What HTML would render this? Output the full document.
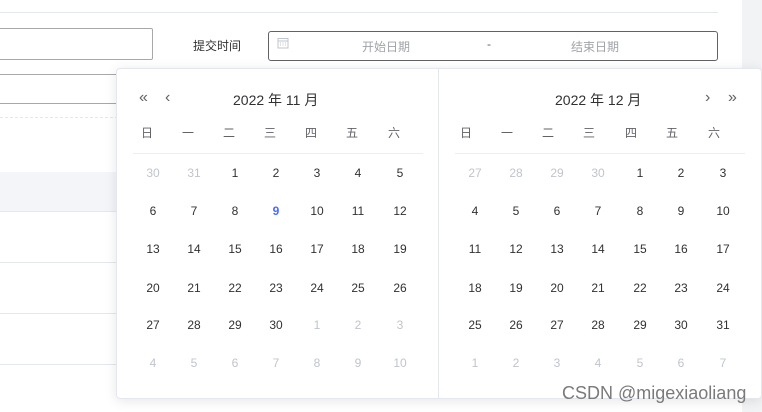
<!DOCTYPE html>
<html><head><meta charset="utf-8">
<style>
*{margin:0;padding:0;box-sizing:border-box}
body{width:762px;height:412px;overflow:hidden;background:#fff;position:relative;font-family:"Liberation Sans","Noto Sans CJK SC",sans-serif;color:#303133}
.a{position:absolute}
.c{position:absolute;width:30px;text-align:center;font-size:12px;line-height:16px;transform:translateX(-15px)}
.g{color:#c0c4cc}
.w{color:#606266}
</style></head><body>
<div class="a" style="left:742px;top:0;width:20px;height:412px;background:#f2f3f5"></div>
<div class="a" style="left:0;top:12px;width:718px;height:1px;background:#e4e7ed"></div>
<div class="a" style="left:-2px;top:28px;width:155px;height:32px;border:1px solid #a8a8a8;border-radius:2px"></div>
<div class="a" style="left:193px;top:37px;font-size:12px;color:#303133">提交时间</div>
<div class="a" style="left:268px;top:31px;width:450px;height:30px;border:1px solid #606266;border-radius:3px"></div>
<svg class="a" style="left:277px;top:37px" width="12" height="12" viewBox="0 0 12 12"><rect x="1" y="1.5" width="10" height="9.5" fill="none" stroke="#c0c4cc"/><line x1="1" y1="4" x2="11" y2="4" stroke="#c0c4cc"/><path d="M3 6h1M5.5 6h1M8 6h1M3 8h1M5.5 8h1M8 8h1" stroke="#c0c4cc"/></svg>
<div class="a" style="left:362px;top:38px;font-size:12px;color:#a0a3a8">开始日期</div>
<div class="a" style="left:487px;top:37px;font-size:12px;color:#606266">-</div>
<div class="a" style="left:571px;top:38px;font-size:12px;color:#a0a3a8">结束日期</div>
<div class="a" style="left:0;top:74px;width:118px;height:1px;background:#a8a8a8"></div>
<div class="a" style="left:0;top:103px;width:118px;height:1px;background:#a8a8a8"></div>
<div class="a" style="left:0;top:117px;width:118px;border-top:1px dashed #e4e7ed"></div>
<div class="a" style="left:0;top:172px;width:118px;height:39px;background:#f4f5f8"></div>
<div class="a" style="left:0;top:211px;width:118px;height:1px;background:#e4e7ed"></div>
<div class="a" style="left:0;top:262px;width:118px;height:1px;background:#e4e7ed"></div>
<div class="a" style="left:0;top:313px;width:118px;height:1px;background:#e4e7ed"></div>
<div class="a" style="left:0;top:364px;width:118px;height:1px;background:#e4e7ed"></div>

<div class="a" id="pop" style="left:116px;top:68px;width:646px;height:331px;background:#fff;border:1px solid #e4e7ed;border-radius:4px;box-shadow:0 2px 12px rgba(0,0,0,.1)"></div>
<div class="a" style="left:438px;top:68px;width:1px;height:331px;background:#e4e7ed"></div>
<div class="a" style="left:133px;top:153px;width:290px;height:1px;background:#ebeef5"></div>
<div class="a" style="left:455px;top:153px;width:290px;height:1px;background:#ebeef5"></div>
<div class="a" style="left:139px;top:89px;font-size:16px;color:#606266">«</div>
<div class="a" style="left:165px;top:89px;font-size:16px;color:#606266">‹</div>
<div class="a" style="left:705px;top:89px;font-size:16px;color:#606266">›</div>
<div class="a" style="left:728px;top:89px;font-size:16px;color:#606266">»</div>
<div class="a" style="left:233px;top:90px;font-size:14px;color:#303133">2022 年 11 月</div>
<div class="a" style="left:555px;top:90px;font-size:14px;color:#303133">2022 年 12 月</div>
<div id="cal"></div>
<div class="a" style="left:562px;top:383px;font-size:18px;color:#7a7a7a">CSDN @migexiaoliang</div>
<script>
var wd="日一二三四五六",h="";
var L=[153,194,235,276,317,358,400],R=[475,516,557,598,640,681,723],Y=[173,211,249,288,325,363];
for(var i=0;i<7;i++){h+='<div class="c w" style="left:'+(L[i]-12)+'px;top:125px;transform:none;width:auto">'+wd[i]+'</div>';h+='<div class="c w" style="left:'+(R[i]-15)+'px;top:125px;transform:none;width:auto">'+wd[i]+'</div>';}
var n=[30,31];for(var d=1;d<=30;d++)n.push(d);for(d=1;d<=10;d++)n.push(d);
var m=[27,28,29,30];for(d=1;d<=31;d++)m.push(d);for(d=1;d<=7;d++)m.push(d);
for(var k=0;k<42;k++){var r=Math.floor(k/7),c=k%7;
var gl=(k<2||k>=32),st=(k==10)?'color:#4a6cf7;font-weight:bold;':'';
h+='<div class="c'+(gl?' g':'')+'" style="'+st+'left:'+L[c]+'px;top:'+(Y[r]-8)+'px">'+n[k]+'</div>';
var gr=(k<4||k>=35);
h+='<div class="c'+(gr?' g':'')+'" style="left:'+R[c]+'px;top:'+(Y[r]-8)+'px">'+m[k]+'</div>';}
document.getElementById('cal').innerHTML=h;
</script>
</body></html>
